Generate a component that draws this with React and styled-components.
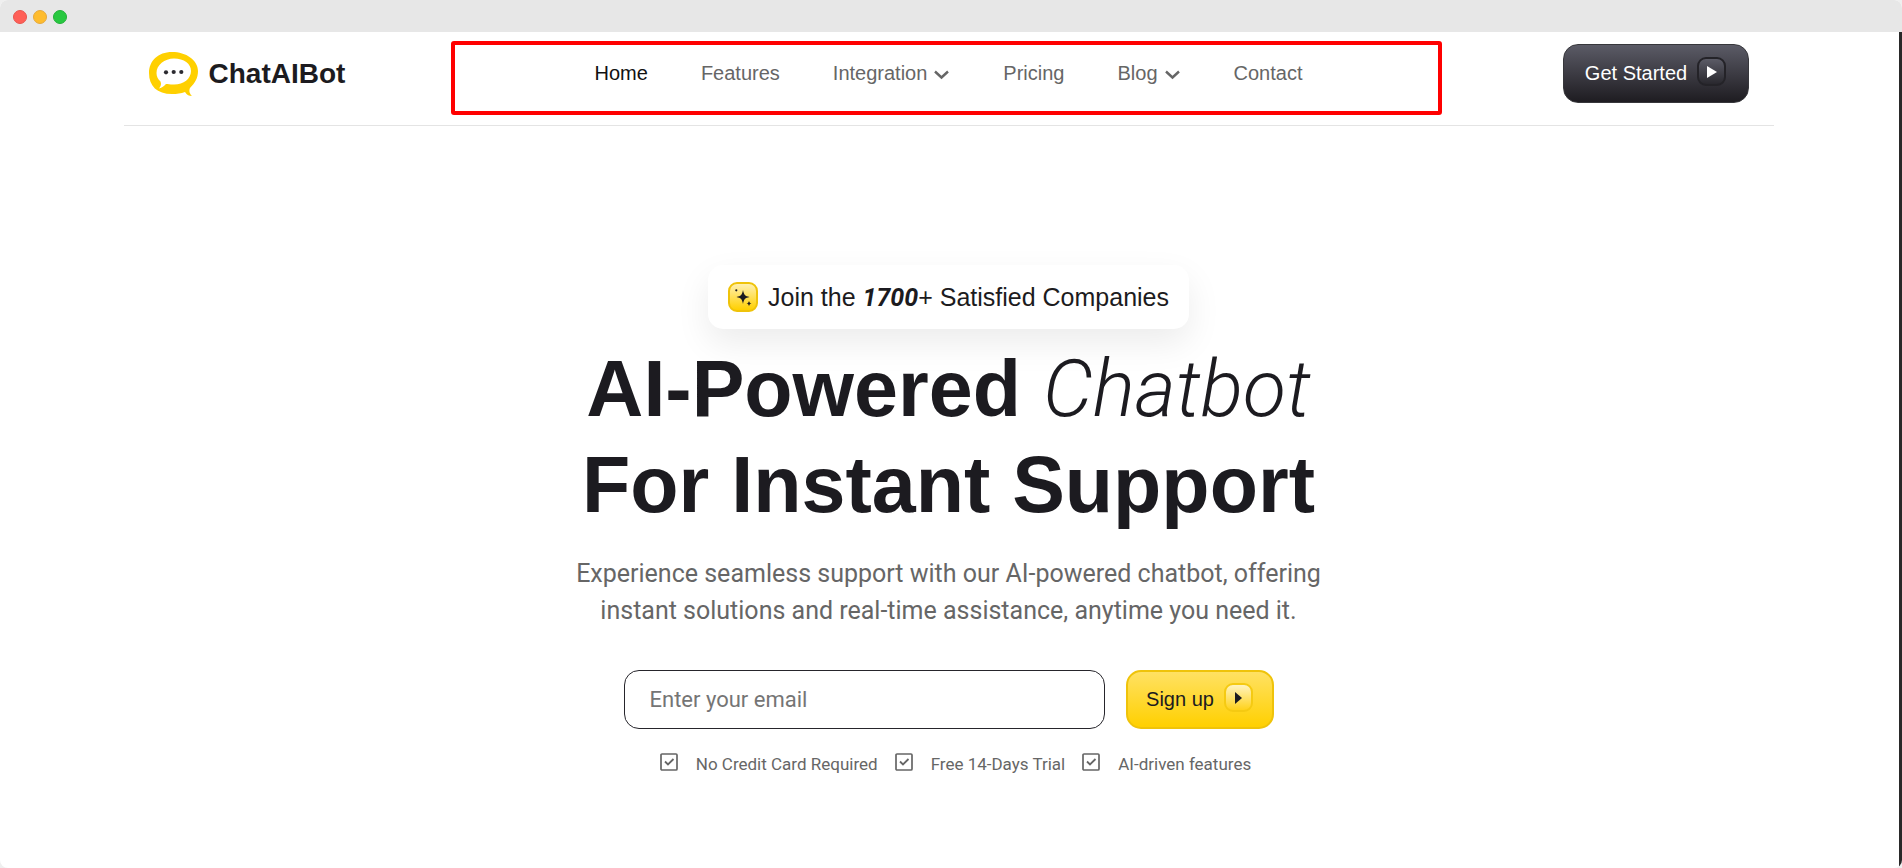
import React from 'react';
import styled, { createGlobalStyle } from 'styled-components';

const sans = "'Liberation Sans', Arial, sans-serif";
const roboto = "Roboto, 'Liberation Sans', sans-serif";

const GlobalStyle = createGlobalStyle`
  * {
    box-sizing: border-box;
  }

  body {
    margin: 0;
    background: #efefef;
    color: #1c1b20;
    font-family: ${sans};
  }
`;

const Window = styled.div`
  display: flex;
  flex-direction: column;
  min-height: 100vh;
  overflow: hidden;
  border-radius: 8px;
  background: #fff;
`;

const TitleBar = styled.div`
  display: flex;
  align-items: center;
  gap: 6px;
  height: 32px;
  padding: 2px 13px 0;
  background: #e7e7e7;
`;

const Light = styled.span`
  width: 14px;
  height: 14px;
  border: 1px solid ${p => p.$edge};
  border-radius: 50%;
  background: ${p => p.$color};
`;

const Page = styled.div`
  flex: 1;
  padding-right: 2px;
  border-right: 3px solid #292929;
`;

const Header = styled.header`
  display: grid;
  grid-template-columns: 1fr auto 1fr;
  align-items: center;
  width: 87%;
  max-width: 1650px;
  margin: 0 auto;
  padding: 12px 25px 22px;
  border-bottom: 1px solid #e4e4e4;
`;

const Brand = styled.a`
  display: flex;
  align-items: center;
  gap: 11px;
  color: #1c1b20;
  font-size: 28px;
  font-weight: 700;
  text-decoration: none;
`;

const Nav = styled.nav`
  position: relative;
  padding-bottom: 2px;
`;

const NavList = styled.ul`
  display: flex;
  gap: 53px;
  margin: 0;
  padding: 0;
  list-style: none;
`;

const NavLink = styled.a`
  display: flex;
  align-items: center;
  gap: 6px;
  color: ${p => (p.$active ? '#111' : '#666')};
  font-size: 20px;
  line-height: 24px;
  text-decoration: none;
`;

const NavHighlight = styled.div`
  position: absolute;
  top: -20px;
  right: -140px;
  bottom: -28px;
  left: -144px;
  border: 4px solid #f00;
  border-radius: 3px;
  pointer-events: none;
`;

const Button = styled.button`
  display: flex;
  align-items: center;
  justify-content: center;
  gap: 10px;
  height: 59px;
  padding: 0 18px;
  border-radius: 15px;
  font-family: ${sans};
  font-size: 20px;
  cursor: pointer;
`;

const DarkButton = styled(Button)`
  justify-self: end;
  width: 186px;
  border: 1px solid #37373b;
  background: linear-gradient(#5b5b66, #1e1c21);
  color: #fff;
`;

const YellowButton = styled(Button)`
  width: 148px;
  border: 2px solid #efc30a;
  background: linear-gradient(#ffe163, #ffd000);
  color: #1c1b20;
`;

const Play = styled.span`
  display: flex;
  align-items: center;
  justify-content: center;
  width: 29px;
  height: 29px;
  margin-bottom: 4px;
  border: 2px solid ${p => (p.$dark ? '#242328' : '#f5ca12')};
  border-radius: 9px;
  background: ${p =>
    p.$dark
      ? 'linear-gradient(#5b5b66, #29282e)'
      : 'linear-gradient(#fff3c0, #ffd21a)'};
`;

const Hero = styled.main`
  display: flex;
  flex-direction: column;
  align-items: center;
  padding: 139px 24px 0;
  text-align: center;
`;

const Badge = styled.div`
  display: flex;
  align-items: center;
  gap: 10px;
  height: 64px;
  padding: 0 20px;
  border-radius: 15px;
  background: #fff;
  box-shadow: 0 14px 34px rgba(0, 0, 0, 0.08);
  font-size: 25px;

  em {
    font-family: ${roboto};
    font-weight: 700;
  }
`;

const Sparkle = styled.span`
  display: flex;
  width: 30px;
  height: 30px;
  border: 2px solid #efc30a;
  border-radius: 9px;
  background: linear-gradient(#fff0b0, #ffd000);
`;

const Title = styled.h1`
  margin: 12px 0 0;
  font-size: 79px;
  font-weight: 700;
  line-height: 96px;

  em {
    font-family: ${roboto};
    font-weight: 300;
  }
`;

const Lead = styled.p`
  max-width: 780px;
  margin: 22px 0 0;
  color: #666;
  font-family: ${roboto};
  font-size: 25px;
  line-height: 37px;
`;

const SignupForm = styled.form`
  display: flex;
  gap: 21px;
  margin: 41px 0 0;
`;

const EmailInput = styled.input`
  width: 481px;
  height: 59px;
  padding: 0 25px;
  border: 1px solid #26252b;
  border-radius: 15px;
  background: #fff;
  color: #1c1b20;
  font-family: ${roboto};
  font-size: 22px;

  &::placeholder {
    color: #757575;
    opacity: 1;
  }
`;

const Perks = styled.ul`
  display: flex;
  gap: 17px;
  margin: 22px 0 0 14px;
  padding: 0;
  color: #666;
  font-family: ${roboto};
  font-size: 17px;
  line-height: 26px;
  list-style: none;

  li {
    display: flex;
    gap: 18px;
  }

  svg {
    margin-top: 2px;
  }
`;

const Logo = () => (
  <svg width="49" height="44" viewBox="0 0 49 44" aria-hidden="true">
    <path
      fill="#ffd000"
      d="M23 0C37 0 49 8 49 19c0 7-3 12-8 17-1 2-1 5 2 8-3 0-5-1-7-4-4 1.500-8 2-13 2C8 42 0 34 0 21 0 9 9 0 23 0Z"
    />
    <path
      fill="#fff"
      d="M25 6.500c10 0 17 5 17 12.500 0 8-8 14-18 13.500-3 0-5-.5-7-.5-2 2-4 4-7 4.500 2-2 2.500-5 1.500-7-2.500-2-4-5-4-8.500 0-8 8-14.500 17.500-14.500Z"
    />
    <circle cx="17" cy="20.300" r="2.100" fill="#2b2a30" />
    <circle cx="24.700" cy="20" r="2.100" fill="#2b2a30" />
    <circle cx="32.300" cy="20" r="2.100" fill="#2b2a30" />
  </svg>
);

const Chevron = () => (
  <svg width="17" height="16" viewBox="0 0 17 16" aria-hidden="true">
    <path d="M2 6.500l6.500 6 6.500-6" fill="none" stroke="#666" strokeWidth="2.400" />
  </svg>
);

const Triangle = ({ color, size }) => (
  <svg width={size} height="12" viewBox={`0 0 ${size} 12`} aria-hidden="true">
    <path d={`M0 0L${size} 6L0 12Z`} fill={color} />
  </svg>
);

const Stars = () => (
  <svg width="26" height="26" viewBox="0 0 26 26" aria-hidden="true">
    <path
      fill="#1c1b20"
      d="M13 6c1 5 2 6 6.500 7-4.500 1-5.500 2-6.500 7-1-5-2-6-6.500-7 4.500-1 5.500-2 6.500-7ZM19 17c.5 1.800 1 2.200 2.500 2.600-1.500.4-2 .9-2.500 2.600-.5-1.700-1-2.200-2.500-2.600 1.500-.4 2-.8 2.500-2.600Z"
    />
    <circle cx="6.300" cy="6.300" r="1.100" fill="#1c1b20" />
  </svg>
);

const Tick = () => (
  <svg width="18" height="18" viewBox="0 0 18 18" aria-hidden="true">
    <rect x="1" y="1" width="16" height="16" rx="1" fill="none" stroke="#666" strokeWidth="1.700" />
    <path d="M5 8.500l3 3 5.500-5.500" fill="none" stroke="#666" strokeWidth="1.800" />
  </svg>
);

const links = [
  { text: 'Home', path: '#home', active: true },
  { text: 'Features', path: '#features' },
  { text: 'Integration', path: '#integration', menu: true },
  { text: 'Pricing', path: '#pricing' },
  { text: 'Blog', path: '#blog', menu: true },
  { text: 'Contact', path: '#contact' },
];

const perks = ['No Credit Card Required', 'Free 14-Days Trial', 'AI-driven features'];

const App = () => (
  <>
    <GlobalStyle />
    <Window>
      <TitleBar>
        <Light $color="#ff5f57" $edge="#e8554e" />
        <Light $color="#febc2e" $edge="#e5a93c" />
        <Light $color="#28c840" $edge="#22b038" />
      </TitleBar>
      <Page>
        <Header>
          <Brand href="#home">
            <Logo />
            ChatAIBot
          </Brand>
          <Nav>
            <NavList>
              {links.map(({ text, path, active, menu }) => (
                <li key={text}>
                  <NavLink href={path} $active={active}>
                    {text}
                    {menu && <Chevron />}
                  </NavLink>
                </li>
              ))}
            </NavList>
            <NavHighlight />
          </Nav>
          <DarkButton type="button">
            Get Started
            <Play $dark>
              <Triangle color="#fff" size={10} />
            </Play>
          </DarkButton>
        </Header>
        <Hero>
          <Badge>
            <Sparkle>
              <Stars />
            </Sparkle>
            <span>
              Join the <em>1700</em>+ Satisfied Companies
            </span>
          </Badge>
          <Title>
            AI-Powered <em>Chatbot</em>
            <br />
            For Instant Support
          </Title>
          <Lead>
            Experience seamless support with our AI-powered chatbot, offering
            instant solutions and real-time assistance, anytime you need it.
          </Lead>
          <SignupForm onSubmit={e => e.preventDefault()}>
            <EmailInput type="email" placeholder="Enter your email" aria-label="Email" />
            <YellowButton type="submit">
              Sign up
              <Play>
                <Triangle color="#1c1b20" size={7} />
              </Play>
            </YellowButton>
          </SignupForm>
          <Perks>
            {perks.map(text => (
              <li key={text}>
                <Tick />
                {text}
              </li>
            ))}
          </Perks>
        </Hero>
      </Page>
    </Window>
  </>
);

export default App;
